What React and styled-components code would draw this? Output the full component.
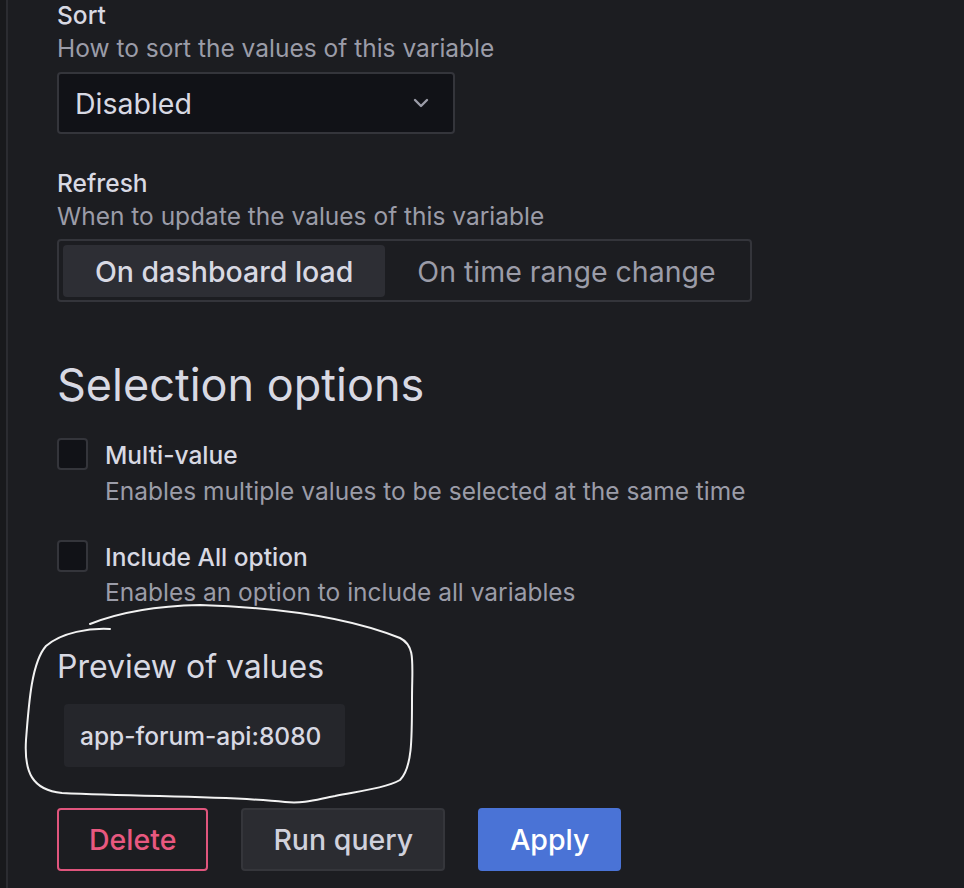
import React from "react";
import styled, { createGlobalStyle } from "styled-components";

const GlobalStyle = createGlobalStyle`
  html, body {
    margin: 0;
    padding: 0;
    background: #1c1d21;
  }
  body {
    font-family: Inter, "Noto Sans", sans-serif;
    color: #ccccdc;
  }
`;

const Page = styled.div`
  position: relative;
  width: 964px;
  height: 888px;
  overflow: hidden;
  display: flex;
`;

const Gutter = styled.div`
  width: 6px;
  flex-shrink: 0;
  background: #18191c;
  border-right: 2px solid #2b2c31;
`;

const Content = styled.div`
  flex: 1;
  padding: 0 0 0 49px;
  display: flex;
  flex-direction: column;
  align-items: flex-start;
`;

const Field = styled.div`
  display: flex;
  flex-direction: column;
  align-items: flex-start;
  margin-top: ${(p) => p.top || 0}px;
`;

const Label = styled.div`
  font-size: 24.5px;
  line-height: 30px;
  font-weight: 500;
  color: #d8d9e3;
`;

const Description = styled.div`
  font-size: 24.5px;
  line-height: 30px;
  color: #9b9ca8;
  margin-top: ${(p) => p.top || 3}px;
`;

const Select = styled.div`
  margin-top: 9px;
  width: 398px;
  height: 62px;
  box-sizing: border-box;
  border: 2px solid #34353b;
  border-radius: 4px;
  background: #111217;
  display: flex;
  align-items: center;
  justify-content: space-between;
  padding: 0 24px 0 16px;
  font-size: 28.5px;
  color: #d8d9e3;
`;

const RadioGroup = styled.div`
  margin-top: 8px;
  width: 695px;
  height: 63px;
  box-sizing: border-box;
  border: 2px solid #34353b;
  border-radius: 4px;
  padding: 4px 4px 3px;
  display: flex;
`;

const RadioOption = styled.div`
  height: 100%;
  flex-shrink: 0;
  white-space: nowrap;
  display: flex;
  align-items: center;
  padding: 0 32px;
  border-radius: 4px;
  font-size: 28.5px;
  font-weight: ${(p) => (p.active ? 500 : 400)};
  color: ${(p) => (p.active ? "#d8d9e3" : "#9b9ca8")};
  background: ${(p) => (p.active ? "#2d2e34" : "transparent")};
`;

const Heading = styled.h2`
  margin: 56px 0 0;
  font-size: 45px;
  line-height: 54px;
  font-weight: 400;
  color: #d8d9e3;
`;

const CheckRow = styled.div`
  display: grid;
  grid-template-columns: 31px 1fr;
  column-gap: 17px;
  margin-top: ${(p) => p.top}px;
`;

const Box = styled.div`
  width: 31px;
  height: 32px;
  box-sizing: border-box;
  border: 2px solid #34353b;
  border-radius: 4px;
  background: #111217;
`;

const CheckText = styled.div`
  display: flex;
  flex-direction: column;
  padding-top: 2px;
`;

const SubHeading = styled.h3`
  margin: 41px 0 0;
  font-size: 32px;
  line-height: 38px;
  font-weight: 400;
  color: #d8d9e3;
`;

const Chip = styled.div`
  margin: 18px 0 0 7px;
  width: 281px;
  height: 63px;
  box-sizing: border-box;
  background: #25262b;
  border-radius: 4px;
  display: flex;
  align-items: center;
  padding-left: 16px;
  font-size: 24.5px;
  font-weight: 500;
  color: #d8d9e3;
`;

const Buttons = styled.div`
  display: flex;
  gap: 33px;
  margin-top: 41px;
`;

const variants = {
  danger: { bg: "transparent", border: "#e0557d", color: "#e8587f" },
  secondary: { bg: "#2b2c31", border: "#35363b", color: "#d0d1dc" },
  primary: { bg: "#4a73d6", border: "#4a73d6", color: "#ffffff" },
};

const Button = styled.button`
  height: 63px;
  box-sizing: border-box;
  padding: 0 30px;
  border-radius: 4px;
  border: 2px solid ${(p) => variants[p.variant].border};
  background: ${(p) => variants[p.variant].bg};
  color: ${(p) => variants[p.variant].color};
  font-family: Inter, "Noto Sans", sans-serif;
  font-size: 28.5px;
  font-weight: 500;
`;

const Scribble = styled.svg`
  position: absolute;
  left: 0;
  top: 0;
  pointer-events: none;
`;

const Chevron = () => (
  <svg width="16" height="10" viewBox="0 0 16 10">
    <path d="M2 2 L8 8 L14 2" fill="none" stroke="#9b9ca8" strokeWidth="2.4" strokeLinecap="round" strokeLinejoin="round" />
  </svg>
);

export default function App() {
  return (
    <Page>
      <GlobalStyle />
      <Gutter />
      <Content>
        <Field>
          <Label>Sort</Label>
          <Description>How to sort the values of this variable</Description>
          <Select>
            <span>Disabled</span>
            <Chevron />
          </Select>
        </Field>
        <Field top={34}>
          <Label>Refresh</Label>
          <Description>When to update the values of this variable</Description>
          <RadioGroup>
            <RadioOption active>On dashboard load</RadioOption>
            <RadioOption>On time range change</RadioOption>
          </RadioGroup>
        </Field>

        <Heading>Selection options</Heading>

        <CheckRow top={26}>
          <Box />
          <CheckText>
            <Label>Multi-value</Label>
            <Description top={6}>Enables multiple values to be selected at the same time</Description>
          </CheckText>
        </CheckRow>
        <CheckRow top={34}>
          <Box />
          <CheckText>
            <Label>Include All option</Label>
            <Description top={5}>Enables an option to include all variables</Description>
          </CheckText>
        </CheckRow>

        <SubHeading>Preview of values</SubHeading>
        <Chip>app-forum-api:8080</Chip>

        <Buttons>
          <Button variant="danger">Delete</Button>
          <Button variant="secondary">Run query</Button>
          <Button variant="primary">Apply</Button>
        </Buttons>
      </Content>

      <Scribble width="964" height="888" viewBox="0 0 964 888">
        <path
          d="M110 629 C 90 628, 62 632, 46 646 C 32 662, 29 700, 26 740 C 24 772, 32 790, 62 793 C 150 797, 230 796, 285 802 C 305 804, 318 799, 335 796 C 360 791, 386 788, 400 780 C 412 768, 412 740, 412 700 C 412 662, 416 646, 400 638 C 360 622, 300 608, 200 605 C 150 606, 115 614, 90 624"
          fill="none"
          stroke="#f2f2f2"
          strokeWidth="2"
          strokeLinecap="round"
        />
      </Scribble>
    </Page>
  );
}
